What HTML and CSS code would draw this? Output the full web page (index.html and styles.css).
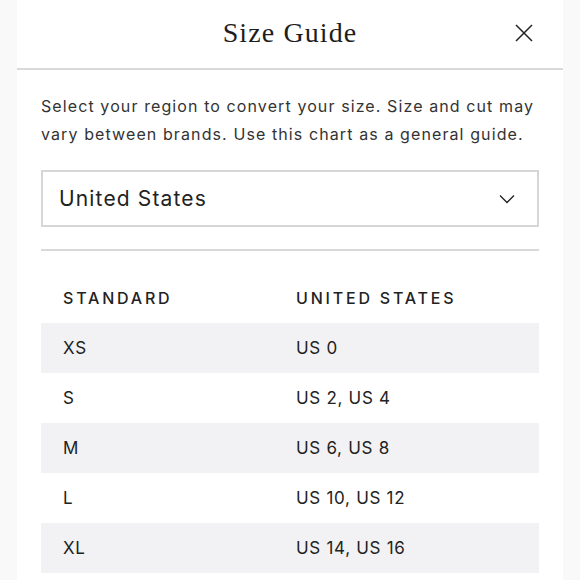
FILE: index.html
```html
<!DOCTYPE html>
<html>
<head>
<meta charset="utf-8">
<link rel="stylesheet" href="styles.css">
</head>
<body>
<div class="modal">
  <header class="head">
    <h1 class="title">Size Guide</h1>
    <button class="close" aria-label="Close">
      <svg width="18" height="18" viewBox="0 0 18 18"><path d="M1 1L17 17M17 1L1 17" stroke="#222" stroke-width="1.5" fill="none"/></svg>
    </button>
  </header>
  <div class="body">
    <p class="intro">Select your region to convert your size. Size and cut may vary between brands. Use this chart as a general guide.</p>
    <div class="select">
      <span>United States</span>
      <svg width="16" height="10" viewBox="0 0 16 10"><path d="M1 1.5L8 8.5L15 1.5" stroke="#222" stroke-width="1.3" fill="none"/></svg>
    </div>
    <div class="rule"></div>
    <div class="table">
      <div class="row th"><span>STANDARD</span><span>UNITED STATES</span></div>
      <div class="row alt"><span>XS</span><span>US 0</span></div>
      <div class="row"><span>S</span><span>US 2, US 4</span></div>
      <div class="row alt"><span>M</span><span>US 6, US 8</span></div>
      <div class="row"><span>L</span><span>US 10, US 12</span></div>
      <div class="row alt"><span>XL</span><span>US 14, US 16</span></div>
    </div>
  </div>
</div>
</body>
</html>
```
FILE: styles.css
```css
html, body { margin: 0; padding: 0; }
body {
  background: #f9f9fa;
  width: 580px;
  height: 580px;
  overflow: hidden;
  font-family: "Inter", "Liberation Sans", sans-serif;
  color: #222;
}
.modal {
  margin: 0 17px;
  background: #fff;
  height: 580px;
}
.head {
  position: relative;
  height: 68px;
  border-bottom: 2px solid #d9d9d9;
  display: flex;
  align-items: center;
  justify-content: center;
}
.title {
  margin: 0;
  font-family: "Liberation Serif", serif;
  font-weight: 400;
  font-size: 28px;
  letter-spacing: 1.1px;
  color: #1e1e1e;
  padding-bottom: 2px;
}
.close {
  position: absolute;
  right: 30px;
  top: 24px;
  border: 0;
  background: none;
  padding: 0;
  width: 18px;
  height: 18px;
  display: flex;
}
.body {
  padding: 0 24px;
}
.intro {
  margin: 22px 0 0;
  font-size: 16px;
  line-height: 28px;
  letter-spacing: 1.1px;
  color: #333;
}
.select {
  margin-top: 22px;
  height: 53px;
  border: 2px solid #d6d6d6;
  display: flex;
  align-items: center;
  justify-content: space-between;
  padding: 0 22px 0 16px;
  font-size: 21px;
  letter-spacing: 1.15px;
  color: #222;
}
.rule {
  margin-top: 22px;
  height: 2px;
  background: #d9d9d9;
}
.table { margin-top: 22px; }
.row {
  display: grid;
  grid-template-columns: 233px 1fr;
  height: 50px;
  align-items: center;
  padding-left: 22px;
  font-size: 17px;
  letter-spacing: 0.7px;
  color: #222;
}
.row.alt { background: #f2f2f4; }
.row.th {
  height: 50px;
  font-size: 16px;
  font-weight: 500;
  letter-spacing: 2.8px;
  align-items: start;
  line-height: 50px;
}
```
